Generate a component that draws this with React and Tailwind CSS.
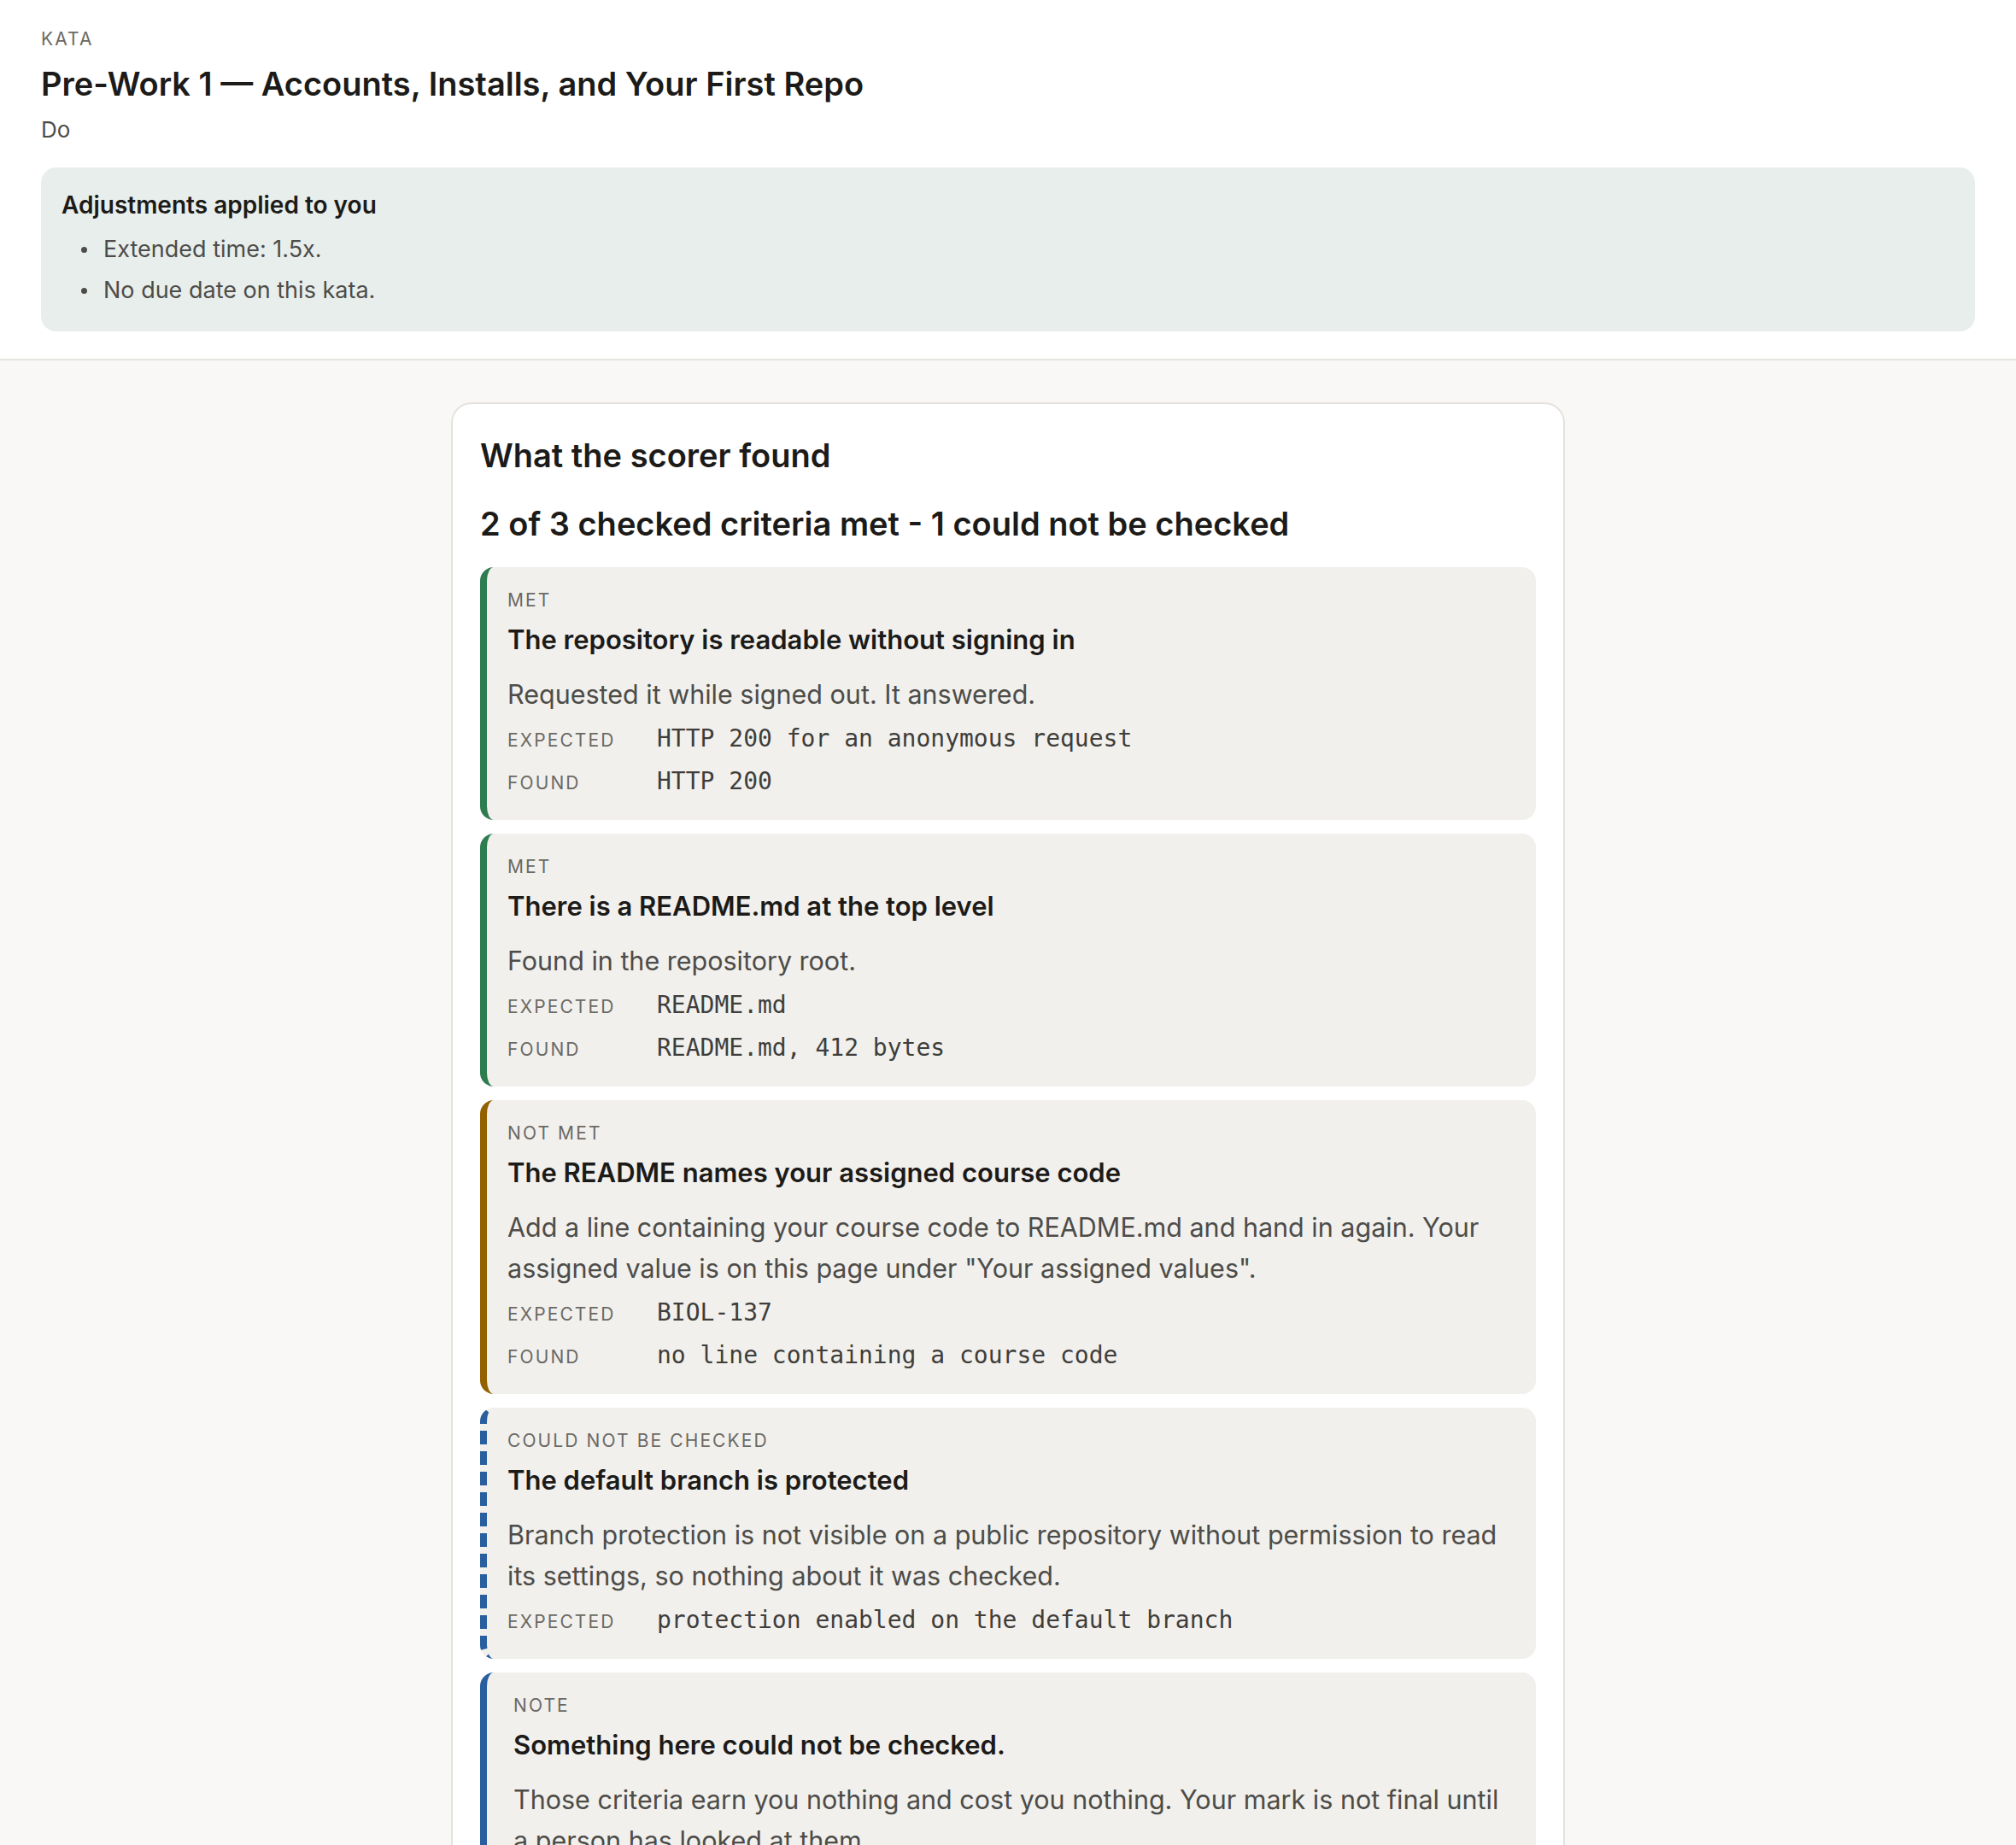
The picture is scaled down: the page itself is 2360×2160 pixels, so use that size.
import React from "react";

const SANS = "font-['Inter','Liberation_Sans',sans-serif]";
const MONO = "font-['DejaVu_Sans_Mono','Liberation_Mono',monospace]";

const CRITERIA = [
  {
    status: "MET",
    tone: "met",
    title: "The repository is readable without signing in",
    detail: "Requested it while signed out. It answered.",
    rows: [
      ["EXPECTED", "HTTP 200 for an anonymous request"],
      ["FOUND", "HTTP 200"],
    ],
  },
  {
    status: "MET",
    tone: "met",
    title: "There is a README.md at the top level",
    detail: "Found in the repository root.",
    rows: [
      ["EXPECTED", "README.md"],
      ["FOUND", "README.md, 412 bytes"],
    ],
  },
  {
    status: "NOT MET",
    tone: "notMet",
    title: "The README names your assigned course code",
    detail:
      'Add a line containing your course code to README.md and hand in again. Your assigned value is on this page under "Your assigned values".',
    rows: [
      ["EXPECTED", "BIOL-137"],
      ["FOUND", "no line containing a course code"],
    ],
  },
  {
    status: "COULD NOT BE CHECKED",
    tone: "unchecked",
    title: "The default branch is protected",
    detail:
      "Branch protection is not visible on a public repository without permission to read its settings, so nothing about it was checked.",
    rows: [["EXPECTED", "protection enabled on the default branch"]],
  },
];

const TONES = {
  met: "border-[#2e7d50] border-solid",
  notMet: "border-[#946100] border-solid",
  unchecked: "border-[#2a5f9f] border-dashed",
};

const Label = ({ children, className = "" }) => (
  <div
    className={`text-[21px] leading-[28px] tracking-[0.1em] text-[#6b6964] ${className}`}
  >
    {children}
  </div>
);

const CriterionCard = ({ item }) => (
  <div
    className={`rounded-[16px] border-l-[8px] bg-[#f1f0ed] pl-[24px] pr-[22px] pt-[25px] pb-[20px] ${TONES[item.tone]}`}
  >
    <Label>{item.status}</Label>
    <h4 className="mt-[12px] text-[31px] leading-[40px] font-semibold text-[#1c1b19]">
      {item.title}
    </h4>
    <p className="mt-[20px] text-[30.5px] leading-[48px] text-[#4d4c48]">
      {item.detail}
    </p>
    <div className="mt-[3px]">
      {item.rows.map(([label, value]) => (
        <div key={label} className="flex items-baseline h-[50px] leading-[50px]">
          <span className="w-[175px] shrink-0 text-[21px] tracking-[0.1em] text-[#6b6964]">
            {label}
          </span>
          <span className={`${MONO} text-[28px] text-[#3f3e3b]`}>{value}</span>
        </div>
      ))}
    </div>
  </div>
);

export default function App() {
  return (
    <div className={`${SANS} min-h-screen bg-[#f9f8f6]`}>
      {/* page header */}
      <header className="bg-white px-[48px] pt-[32px] pb-[32px] border-b-2 border-[#e6e4df]">
        <div className="text-[21px] leading-[28px] tracking-[0.1em] text-[#6b6964]">
          KATA
        </div>
        <h1 className="mt-[16px] text-[38px] leading-[44px] font-semibold text-[#1c1b19]">
          Pre-Work 1 — Accounts, Installs, and Your First Repo
        </h1>
        <div className="mt-[14px] text-[26px] leading-[36px] text-[#4d4c48]">Do</div>

        <div className="mt-[26px] rounded-[18px] bg-[#e8eeec] px-[24px] pt-[24px] pb-[24px]">
          <h3 className="text-[28px] leading-[40px] font-semibold text-[#1c1b19]">
            Adjustments applied to you
          </h3>
          <ul className="mt-[8px]">
            {["Extended time: 1.5x.", "No due date on this kata."].map((line) => (
              <li key={line} className="flex items-center h-[48px] text-[27px] text-[#4d4c48]">
                <span className="ml-[23px] mr-[19px] w-[7px] h-[7px] rounded-full bg-[#4d4c48]" />
                {line}
              </li>
            ))}
          </ul>
        </div>
      </header>

      {/* scorer results */}
      <main className="flex justify-center pt-[49px] pb-[48px]">
        <section className="w-[1304px] rounded-[24px] border-2 border-[#e4e2de] bg-white px-[32px] pt-[38px] pb-[32px]">
          <h2 className="text-[38px] leading-[44px] font-semibold text-[#1c1b19]">
            What the scorer found
          </h2>
          <h3 className="mt-[34px] text-[38px] leading-[48px] font-semibold text-[#1c1b19]">
            2 of 3 checked criteria met - 1 could not be checked
          </h3>

          <div className="mt-[27px] flex flex-col gap-[16px]">
            {CRITERIA.map((item) => (
              <CriterionCard key={item.title} item={item} />
            ))}

            <div className="rounded-[16px] border-l-[8px] border-solid border-[#2a5f9f] bg-[#f1f0ed] pl-[31px] pr-[22px] pt-[25px] pb-[24px]">
              <Label>NOTE</Label>
              <h4 className="mt-[12px] text-[31px] leading-[40px] font-semibold text-[#1c1b19]">
                Something here could not be checked.
              </h4>
              <p className="mt-[20px] text-[30.5px] leading-[48px] text-[#4d4c48]">
                Those criteria earn you nothing and cost you nothing. Your mark is not final
                until a person has looked at them.
              </p>
            </div>
          </div>
        </section>
      </main>
    </div>
  );
}
